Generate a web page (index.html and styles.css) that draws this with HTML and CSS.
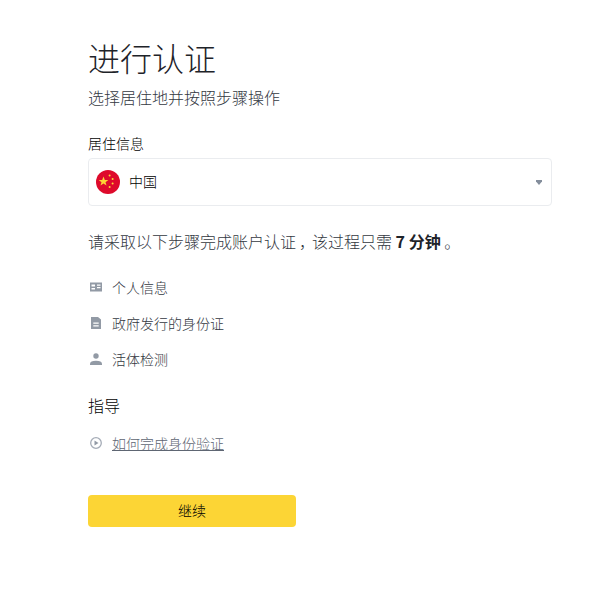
FILE: index.html
```html
<!DOCTYPE html>
<html lang="zh-CN">
<head>
    <meta charset="UTF-8">
    <meta name="viewport" content="width=device-width, initial-scale=1.0">
    <title>进行认证</title>
    <link rel="stylesheet" href="styles.css">
</head>
<body>
    <main class="verify">
        <h1>进行认证</h1>
        <p class="subtitle">选择居住地并按照步骤操作</p>

        <div class="field-label">居住信息</div>
        <div class="select">
            <svg class="flag" viewBox="0 0 24 24">
                <circle cx="12" cy="12" r="12" fill="#de0a2b"/>
                <polygon fill="#fcd535" points="7.5,6.600 8.800,10 12.300,10 9.500,12.200 10.500,15.600 7.500,13.600 4.500,15.600 5.500,12.200 2.700,10 6.200,10"/>
                <circle cx="13.600" cy="5.400" r="1" fill="#fcd535"/>
                <circle cx="16.600" cy="9" r="1" fill="#fcd535"/>
                <circle cx="16.600" cy="13.400" r="1" fill="#fcd535"/>
                <circle cx="13.600" cy="17" r="1" fill="#fcd535"/>
            </svg>
            <span class="select-value">中国</span>
            <svg class="caret" viewBox="0 0 6 5"><polygon points="0,0 6,0 6,1.500 3,5 0,1.500" fill="#848e9c"/></svg>
        </div>

        <p class="intro">请采取以下步骤完成账户认证<span class="comma">，</span>该过程只需 <b>7 分钟</b> 。</p>

        <ul class="steps">
            <li>
                <svg class="icon" viewBox="0 0 16 16"><path fill="#929aa5" fill-rule="evenodd" d="M2 3.500h12v9H2zM3.500 5.500v2h3.500v-2zM9 5.500v1.200h3.500V5.500zM9 8v1.200h3.500V8zM3.500 9v1.500h3.500V9z"/></svg>
                个人信息
            </li>
            <li>
                <svg class="icon" viewBox="0 0 16 16"><path fill="#929aa5" fill-rule="evenodd" d="M3 2h7l3 2.500V14H3zM5.300 7.500v1.300h5.400V7.500zM5.300 10.200v1.300h5.400v-1.300z"/></svg>
                政府发行的身份证
            </li>
            <li>
                <svg class="icon" viewBox="0 0 16 16"><circle cx="8" cy="5" r="2.700" fill="#929aa5"/><path fill="#929aa5" d="M2 14v-1.300c0-1.900 2.200-2.900 6-2.900s6 1 6 2.900V14z"/></svg>
                活体检测
            </li>
        </ul>

        <div class="guide-title">指导</div>
        <div class="guide-link">
            <svg class="icon" viewBox="0 0 16 16"><circle cx="8" cy="8" r="5.300" fill="none" stroke="#a5acb7" stroke-width="1.300"/><polygon points="6.500,5.500 10.500,8 6.500,10.500" fill="#929aa5"/></svg>
            <a href="#">如何完成身份验证</a>
        </div>

        <button class="continue">继续</button>
    </main>
</body>
</html>
```

FILE: styles.css
```css
body {
    margin: 0;
    background: #fff;
    font-family: "Noto Sans CJK SC", "Liberation Sans", sans-serif;
    color: #33383f;
}
.verify {
    width: 464px;
    margin-left: 88px;
    padding-top: 37px;
}
h1 {
    margin: 0;
    font-size: 32px;
    line-height: 40px;
    font-weight: 300;
    color: #1e2329;
}
.subtitle {
    margin: 10px 0 0;
    font-size: 16px;
    line-height: 20px;
    font-weight: 300;
}
.field-label {
    margin-top: 26px;
    font-size: 14px;
    line-height: 20px;
    font-weight: 300;
    color: #000;
}
.select {
    display: flex;
    align-items: center;
    height: 46px;
    margin-top: 5px;
    padding: 0 7px;
    border: 1px solid #eaecef;
    border-radius: 4px;
}
.flag {
    width: 24px;
    height: 24px;
}
.select-value {
    flex: 1;
    margin-left: 9px;
    margin-top: -2px;
    font-size: 14px;
    font-weight: 300;
    color: #000;
}
.caret {
    width: 6px;
    height: 5px;
    margin-right: 2px;
}
.intro {
    margin: 23px 0 0;
    font-size: 16px;
    line-height: 24px;
    font-weight: 300;
}
.comma {
    display: inline-block;
    box-sizing: border-box;
    width: 16px;
    padding-left: 4px;
    font-feature-settings: "palt";
}
.intro b {
    font-weight: 700;
    color: #1e2329;
}
.steps {
    list-style: none;
    margin: 16px 0 0;
    padding: 0;
}
.steps li {
    display: flex;
    align-items: center;
    gap: 8px;
    height: 36px;
    font-size: 14px;
    font-weight: 300;
}
.icon {
    width: 16px;
    height: 16px;
    flex-shrink: 0;
}
.guide-title {
    margin-top: 16px;
    font-size: 16px;
    line-height: 24px;
    font-weight: 300;
    color: #000;
}
.guide-link {
    display: flex;
    align-items: center;
    gap: 8px;
    margin-top: 14px;
    height: 24px;
    font-size: 14px;
    font-weight: 300;
}
.guide-link a {
    color: #5e6673;
}
.continue {
    display: block;
    width: 208px;
    height: 32px;
    margin-top: 40px;
    padding: 0 0 2px;
    border: none;
    border-radius: 4px;
    background-color: #fcd535;
    color: #000;
    font-family: inherit;
    font-size: 14px;
    font-weight: 300;
    cursor: pointer;
}
```
